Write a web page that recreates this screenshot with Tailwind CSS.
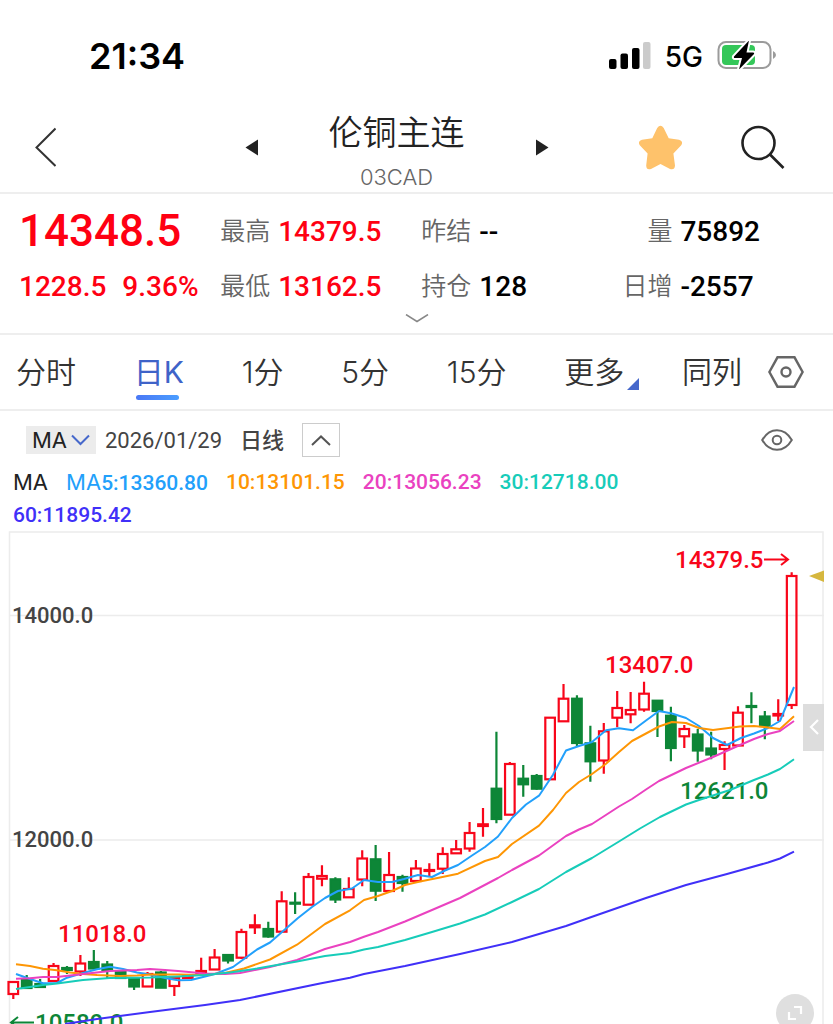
<!DOCTYPE html>
<html lang="zh-CN">
<head>
<meta charset="utf-8">
<meta name="viewport" content="width=device-width, initial-scale=1">
<title>伦铜主连 03CAD</title>
<script src="https://cdn.jsdelivr.net/npm/@tailwindcss/browser@4"></script>
</head>
<body class="bg-white font-[Inter,'Noto_Sans_CJK_SC',sans-serif] text-[#222]">
<main class="flex min-h-screen flex-col overflow-hidden">

  <!-- status bar -->
  <div class="flex h-[110px] items-center justify-between pr-[56px] pl-[89px] text-black">
    <div class="pt-px text-[36px] font-semibold">21:34</div>
    <div class="flex items-center">
      <svg class="mr-[14px] h-7 w-[42px]" viewBox="0 0 42 28" aria-hidden="true">
        <rect x="0" y="18" width="7.500" height="10" rx="2"/>
        <rect x="11.500" y="12.500" width="7.500" height="15.500" rx="2"/>
        <rect x="23" y="7" width="7.500" height="21" rx="2"/>
        <rect x="34" y="1" width="7.500" height="27" rx="2" fill="#cbcbcb"/>
      </svg>
      <span class="mr-[14px] pt-[3px] text-[28px] font-medium">5G</span>
      <svg class="h-7 w-[60px]" viewBox="0 0 60 28" aria-hidden="true">
        <rect x="1.500" y="1" width="52" height="26" rx="7.500" fill="none" stroke="#9b9b9b" stroke-width="2"/>
        <rect x="5" y="4" width="33" height="20" rx="4" fill="#34c759"/>
        <path d="M56 10 Q59 11.500 59 14 Q59 16.500 56 18 Z" fill="#9b9b9b"/>
        <path d="M32 -0.500 L17 15.500 Q16.500 17 18 17 H25 L22 28.500 L37 13 Q37.500 11.500 36 11.500 H29.500 Z" fill="#000" stroke="#fff" stroke-width="4" paint-order="stroke" stroke-linejoin="round"/>
      </svg>
    </div>
  </div>

  <!-- title bar -->
  <header class="grid h-[84px] grid-cols-[1fr_auto_1fr] items-start border-b-2 border-[#eeeeee] pr-10">
    <button type="button" aria-label="返回" class="mt-[17px] ml-[35px] w-[21px]">
      <svg class="h-10 w-[21px]" viewBox="0 0 21 40" fill="none" stroke="#333" stroke-width="2"><path d="M20.500 1.500 L1.500 20.500 L20.500 39"/></svg>
    </button>
    <div class="flex items-start gap-[70px]">
      <button type="button" aria-label="上一个" class="mt-[29px]">
        <svg class="h-[17px] w-[14px]" viewBox="0 0 14 17" fill="#222"><path d="M0.500 8.500 L13 0.500 V16.500 Z"/></svg>
      </button>
      <div class="text-center">
        <h1 class="text-[34px] leading-[46px] font-[350]">伦铜主连</h1>
        <p class="text-[22px] leading-[42px] font-light text-[#666]">03CAD</p>
      </div>
      <button type="button" aria-label="下一个" class="mt-[29px]">
        <svg class="h-[17px] w-[14px]" viewBox="0 0 14 17" fill="#222"><path d="M13.500 8.500 L1 0.500 V16.500 Z"/></svg>
      </button>
    </div>
    <div class="mt-[15px] flex justify-end gap-[59px] pr-2">
      <button type="button" aria-label="自选">
        <svg class="h-[45px] w-[43px]" viewBox="0 0 43 45" fill="#fec26b"><path d="M18.200 3 Q21.500 -1.500 24.700 3 L29.700 13.200 L40 14.800 Q45 16.200 42 20.400 L34.400 28.500 L36 40.500 Q35.600 45.500 31 44 L21.500 39 L12 44 Q7.400 45.500 7.200 40.500 L8.600 28.500 L1 20.400 Q-2 16.200 3 14.800 L13.300 13.200 Z"/></svg>
      </button>
      <button type="button" aria-label="搜索">
        <svg class="h-[45px] w-[44px]" viewBox="0 0 44 45" fill="none" stroke="#222" stroke-width="2.600"><circle cx="17.500" cy="18" r="16"/><path d="M29 29.500 L42.500 43"/></svg>
      </button>
    </div>
  </header>

  <!-- quote summary -->
  <section class="border-b-2 border-[#eeeeee] font-[Roboto,'Noto_Sans_CJK_SC',sans-serif]">
    <div class="grid grid-cols-[1fr_1fr_1fr_auto] pt-[10px] pr-[73px] pl-[19px] text-[28px] leading-[55px] font-medium whitespace-nowrap text-black">
      <div class="text-[44px] text-[#ff0012]">14348.5</div>
      <div class="flex gap-2"><span class="text-[25px] font-[350] text-[#666]">最高</span><span class="text-[#ff0012]">14379.5</span></div>
      <div class="flex gap-2"><span class="text-[25px] font-[350] text-[#666]">昨结</span><span>--</span></div>
      <div class="flex gap-2"><span class="w-[50px] text-right text-[25px] font-[350] text-[#666]">量</span><span>75892</span></div>
      <div class="flex gap-4 text-[#ff0012]"><span>1228.5</span><span>9.36%</span></div>
      <div class="flex gap-2"><span class="text-[25px] font-[350] text-[#666]">最低</span><span class="text-[#ff0012]">13162.5</span></div>
      <div class="flex gap-2"><span class="text-[25px] font-[350] text-[#666]">持仓</span><span>128</span></div>
      <div class="flex gap-2"><span class="w-[50px] text-right text-[25px] font-[350] text-[#666]">日增</span><span>-2557</span></div>
    </div>
    <button type="button" aria-label="展开" class="mx-auto flex h-[19px] w-6 items-start">
      <svg class="h-[10px] w-6" viewBox="0 0 24 10" fill="none" stroke="#888" stroke-width="1.500"><path d="M1 0.500 L12 7.500 L23 0.500"/></svg>
    </button>
  </section>

  <!-- period tabs -->
  <nav class="flex h-[76px] items-center border-b-2 border-[#eeeeee] pr-[29px] pl-4 text-[30px] leading-[72px] font-[350] text-[#333]">
    <div class="flex flex-1 justify-between">
      <button type="button">分时</button>
      <button type="button" aria-current="true" class="relative font-normal text-[#3f63c8]">日K<span class="absolute bottom-[8px] left-[2px] h-[5px] w-[43px] rounded-full bg-linear-to-r from-[#4a78f5] to-[#4a9dff]"></span></button>
      <button type="button">1分</button>
      <button type="button">5分</button>
      <button type="button">15分</button>
      <button type="button" class="relative">更多<svg class="absolute right-[-15px] bottom-[18px] h-3 w-3" viewBox="0 0 12 12" fill="#4668cb"><path d="M12 0 V12 H0 Z"/></svg></button>
      <button type="button">同列</button>
    </div>
    <button type="button" aria-label="设置" class="ml-[26px]">
      <svg class="h-8 w-9" viewBox="0 0 36 32" fill="none" stroke="#666" stroke-width="2.400"><path d="M9.500 1.300 H26.500 L34.600 16 L26.500 30.700 H9.500 L1.400 16 Z"/><circle cx="18" cy="16" r="4.500"/></svg>
    </button>
  </nav>

  <!-- indicator row -->
  <div class="flex items-center pt-3 pr-10 pl-[26px] font-[Roboto,'Noto_Sans_CJK_SC',sans-serif] text-[22px] text-[#444]">
    <button type="button" class="flex h-7 w-[70px] items-center justify-between bg-[#ececec] px-[6px] font-[Inter,sans-serif] text-[#222]">MA
      <svg class="h-3 w-[19px]" viewBox="0 0 19 12" fill="none" stroke="#4668cb" stroke-width="2"><path d="M1 1.500 L9.500 10 L18 1.500"/></svg>
    </button>
    <time datetime="2026-01-29" class="ml-[9px]">2026/01/29</time>
    <span class="ml-[18px] font-medium">日线</span>
    <button type="button" aria-label="收起" class="ml-[18px] flex h-[34px] w-[38px] items-center justify-center border border-[#cccccc]">
      <svg class="h-[11px] w-5" viewBox="0 0 20 11" fill="none" stroke="#555" stroke-width="2"><path d="M1 10 L10 1.500 L19 10"/></svg>
    </button>
    <button type="button" aria-label="显示" class="ml-auto">
      <svg class="h-[22px] w-8" viewBox="0 0 32 22" fill="none" stroke="#666" stroke-width="2"><path d="M1.200 11 C5 4.500 10 1.200 16 1.200 S27 4.500 30.800 11 C27 17.500 22 20.800 16 20.800 S5 17.500 1.200 11 Z"/><circle cx="16" cy="11" r="4.300"/></svg>
    </button>
  </div>

  <!-- moving average legend -->
  <div class="flex flex-wrap gap-x-[18px] px-[13px] pt-[9px] font-[Roboto,sans-serif] text-[21px] leading-8 font-medium">
    <span class="font-[Inter,sans-serif] text-[22px] font-normal text-[#222]">MA</span>
    <span class="text-[#22a0fb]"><span class="font-[Inter,sans-serif] text-[22px] font-normal">MA</span>5:13360.80</span>
    <span class="text-[#fe9604]">10:13101.15</span>
    <span class="text-[#ea42c0]">20:13056.23</span>
    <span class="text-[#17ccb9]">30:12718.00</span>
    <span class="w-full text-[#4030f8]">60:11895.42</span>
  </div>

  <!-- candlestick chart -->
  <section class="relative overflow-hidden" aria-label="日K线图">
    <svg class="block w-full font-[Roboto,sans-serif] font-medium" viewBox="0 531 833 493" fill="none">
      <g stroke="#ececec" stroke-width="1.500">
        <path d="M9.500 1026 V532 H823 V1026"/>
        <path d="M10 615.500 H824 M10 840 H824"/>
      </g>
      <g id="candles" stroke-width="2.200"></g>
      <g font-size="22">
        <text x="12" y="623" fill="#444">14000.0</text>
        <text x="12" y="847" fill="#444">12000.0</text>
      </g>
      <g font-size="24" fill="#f8061a">
        <text x="58" y="942">11018.0</text>
        <text x="605" y="673">13407.0</text>
        <text x="675" y="568">14379.5</text>
      </g>
      <g font-size="24" fill="#0d8637">
        <text x="680" y="799">12621.0</text>
        <text x="35" y="1031">10580.0</text>
      </g>
      <path d="M764 559.500 H788 M781 554 L788 559.500 L781 565" stroke="#f8061a" stroke-width="2"/>
      <path d="M34 1022.500 H11 M18 1017 L11 1022.500 L18 1028" stroke="#0d8637" stroke-width="2"/>
      <path d="M809 576 L824 570.500 V582 Z" fill="#d6b73e"/>
      <g stroke-width="2" stroke-linejoin="round">
        <polyline stroke="#4030f8" points="65,1024 97,1019 150,1012 205,1005 240,1000 320,983.5 350,977.7 364,974 405,966 460,954 512,942 539,934 566,926 590,917.5 646,898 686,885 727,874 768,862.5 780,858.5 794,851.7"/>
        <polyline stroke="#22a0fb" points="16,974 30,979 43,983.3 57,983 67,977.7 83,973 97,969.3 110,966.7 123,969 137,972.5 150,974.5 165,978 178,980.3 191,980 203,977 215,974 233,967 257,949.5 270,942.5 298,918 312,907 325,898 338,891 352,888.5 364,880 378,882 392,882 404,879 418,875 432,877 445,870.5 458,865 472,855.5 485,847 498,836.5 512,818 526,804.5 539,795.7 553,774.7 566,750.5 579,746 592,742 606,730.3 619,728.3 633,730.3 646,720.5 659,711 672,713.5 686,718 699,726 713,738 727,745 741,738 754,733.5 768,728 780,721 794,687"/>
        <polyline stroke="#fe9604" points="16,964.3 30,966 43,968.7 57,970.3 70,972.5 83,974 97,975 120,976 137,975.5 150,974.5 178,974.5 203,975 225,973 244,968.5 270,959.5 297,944.7 325,924 350,910.3 364,900 378,896 392,891 405,885 420,881.5 440,877.5 458,873.7 485,861 498,857 512,844 539,825.7 553,810 566,793 579,782 592,774 606,763.7 619,752 632,741 646,733.5 659,726.5 672,722 686,723 699,728 713,730 740,726.5 754,726 768,727.5 780,729 794,716.3"/>
        <polyline stroke="#ea42c0" points="16,978.7 30,978.3 43,977 57,977 83,974 110,971 137,970 150,969 165,970 178,971 205,973.5 225,974 240,973 270,967 297,960 325,949 350,942 364,936.7 378,932 405,921.5 432,910 460,898 498,878 512,870 539,855.5 566,836 579,829.5 592,824 619,806.5 632,799 646,789.5 659,781 686,768 713,757 740,745 754,739 768,734 780,731 794,721"/>
        <polyline stroke="#17ccb9" points="16,989 30,987 43,985 57,983.5 83,980 110,978 150,977.5 178,976.5 205,975 230,972.5 257,968.5 297,961.5 325,956 350,953 364,949.5 378,947 405,940 432,932 460,923.5 485,914.5 512,902 539,889 566,872 592,858 619,841.5 640,828.5 660,817 686,804.5 699,800 730,790 754,780 768,774.5 780,769 794,759.3"/>
      </g>
    </svg>
    <button type="button" aria-label="展开侧栏" class="absolute top-[35%] right-[9px] flex h-[47px] w-[21px] items-center justify-center bg-[#d9d9d9]/90">
      <svg class="h-4 w-[10px]" viewBox="0 0 10 16" fill="none" stroke="#fff" stroke-width="2.200"><path d="M9 1 L2 8 L9 15"/></svg>
    </button>
    <button type="button" aria-label="全屏" class="absolute right-[19px] bottom-[-8px] flex size-[38px] items-center justify-center rounded-full bg-[#dfdfdf]">
      <svg class="size-4" viewBox="0 0 16 16" fill="none" stroke="#fff" stroke-width="2.200"><path d="M7 2 H14 V9 M2 7 V14 H9"/></svg>
    </button>
  </section>
</main>

<script>
// Each day: direction (r = up, g = down), high, body top, body bottom, low, in chart units.
const days = [
  ['r',981,982,994,999],['g',975,979,988,989],['g',979,984,987,987],['r',963,966,981,982],['g',966,968,970,974],
  ['r',955,963.5,971.5,976],['g',950,962,968.5,969.5],['g',961,964.5,970,979],['g',971,972,978,979],['g',977,979,986.5,990],
  ['r',972,974,986.5,987],['g',971,972.5,987.7,988],['r',977,978,986,996],['r',976,976,978,978],['r',957.7,971,973,973],
  ['r',949,957.5,969.5,970],['g',954,955,960.5,963.5],['r',928.7,932,957.7,959],['r',914.3,925.3,927.3,934],['g',921.7,929,936.5,937.7],
  ['r',891.3,901.3,931.7,933],['g',892.3,902.7,903.7,914],['r',873,877,904.7,905],['r',865.3,876,878.7,886.3],['g',877.3,879.3,899.5,903],
  ['r',877.3,889,897.3,898],['r',850.3,858.5,879.5,886.3],['g',845,859.3,890.7,901],['r',852,875,891,891],['g',874.7,877,883,891.7],
  ['r',860,868.5,881,881],['r',863.3,870,871,876.7],['r',847.3,854,868.7,874],['r',840,849.3,853.3,854],['r',822,833,848.5,851.7],
  ['r',808,824.3,826,836.7],['g',731.7,788.7,819,823.3],['r',762,764,814.7,815],['g',765,778.7,784.3,796.7],['g',774,776,788.7,789.7],
  ['r',717.7,717.7,779.3,779.3],['r',684,698.7,721.3,722],['g',695.3,698.7,743,746.3],['g',725.7,743.3,761.3,781.7],['r',723,731.3,760.5,773.7],
  ['r',691,708,717.7,727.3],['r',692,710,714.3,723.3],['r',681.7,693.7,709.5,711.7],['g',700,700.7,711,737],['g',706.7,715.7,748,761.3],
  ['r',725,729,736.3,748],['g',729,734.5,750.5,761.7],['g',731.7,748.5,754.5,759.3],['r',741.3,745,749,770],['r',706.3,712.7,745.5,746.5],
  ['g',692.3,706,707,723.3],['g',711,716.5,726,739.3],['r',699.3,714,715.5,721],['r',572.3,576,705,709]
];
const ns = 'http://www.w3.org/2000/svg';
const group = document.getElementById('candles');
days.forEach(([dir, high, top, bottom, low], i) => {
  const x = 13.3 + 13.42 * i;
  const color = dir === 'r' ? '#f8061a' : '#0d8637';
  const wick = document.createElementNS(ns, 'path');
  wick.setAttribute('d', `M${x} ${high}V${top}M${x} ${bottom}V${low}`);
  wick.setAttribute('stroke', color);
  const body = document.createElementNS(ns, 'rect');
  body.setAttribute('x', x - 4.8);
  body.setAttribute('y', top);
  body.setAttribute('width', 9.6);
  body.setAttribute('height', bottom - top);
  body.setAttribute('stroke', color);
  if (dir === 'g') body.setAttribute('fill', color);
  group.append(wick, body);
});
</script>
</body>
</html>
